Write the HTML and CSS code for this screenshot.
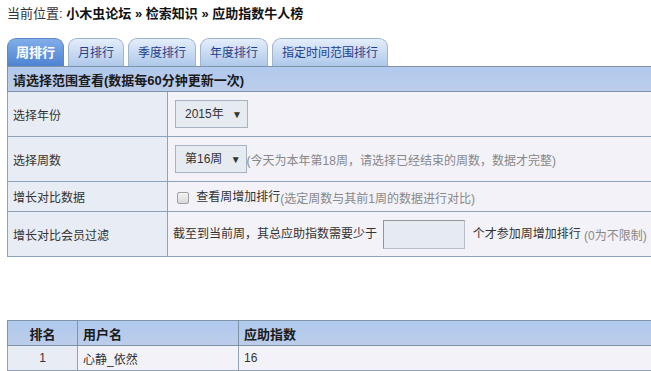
FILE: index.html
```html
<!DOCTYPE html>
<html lang="zh-CN">
<head>
    <meta charset="UTF-8">
    <title>应助指数牛人榜</title>
    <link rel="stylesheet" href="styles.css">
</head>
<body>
    <div class="page">
        <div class="breadcrumb">
            当前位置: <b>小木虫论坛</b> <b>»</b> <b>检索知识</b> <b>»</b> <b>应助指数牛人榜</b>
        </div>

        <ul class="tabs">
            <li class="tab active">周排行</li>
            <li class="tab">月排行</li>
            <li class="tab">季度排行</li>
            <li class="tab">年度排行</li>
            <li class="tab">指定时间范围排行</li>
        </ul>

        <table class="filter">
            <tr>
                <th colspan="2">请选择范围查看(数据每60分钟更新一次)</th>
            </tr>
            <tr class="tall">
                <td class="label">选择年份</td>
                <td><span class="select">2015年 <i>▼</i></span></td>
            </tr>
            <tr class="tall">
                <td class="label">选择周数</td>
                <td><span class="select">第16周 <i>▼</i></span><span class="hint">(今天为本年第18周，请选择已经结束的周数，数据才完整)</span></td>
            </tr>
            <tr>
                <td class="label">增长对比数据</td>
                <td><span class="check"></span> 查看周增加排行<span class="hint">(选定周数与其前1周的数据进行对比)</span></td>
            </tr>
            <tr class="tall">
                <td class="label">增长对比会员过滤</td>
                <td>截至到当前周，其总应助指数需要少于 <span class="input"></span> 个才参加周增加排行 <span class="hint">(0为不限制)</span></td>
            </tr>
        </table>

        <table class="rank">
            <tr>
                <th class="num">排名</th>
                <th class="user">用户名</th>
                <th>应助指数</th>
            </tr>
            <tr>
                <td class="num">1</td>
                <td>心静_依然</td>
                <td>16</td>
            </tr>
        </table>
    </div>
</body>
</html>
```

FILE: styles.css
```css
* {
    margin: 0;
    padding: 0;
    box-sizing: border-box;
}

html, body {
    overflow: hidden;
}

body {
    font-family: "Liberation Sans", "Noto Sans CJK SC", sans-serif;
    font-size: 12px;
    color: #222;
    background: #fff;
}

.page {
    width: 700px;
    padding: 5px 0 0 7px;
}

.breadcrumb {
    font-size: 13px;
    color: #333;
    line-height: 17px;
}

.breadcrumb b {
    color: #111;
}

.tabs {
    list-style: none;
    display: flex;
    gap: 4px;
    margin-top: 16px;
    height: 28px;
    align-items: flex-end;
}

.tab {
    height: 28px;
    line-height: 28px;
    padding: 0 9px;
    font-size: 12px;
    color: #1d3f8e;
    border: 1px solid #9fb4cf;
    border-bottom: none;
    border-radius: 9px 9px 0 0;
    background: linear-gradient(#e4eefb, #aec8ea);
}

.tab.active {
    color: #fff;
    font-weight: bold;
    font-size: 13px;
    padding: 0 8px;
    border-color: #5b88c8;
    background: linear-gradient(#82aee9, #4d83d2);
}

table {
    border-collapse: collapse;
    width: 100%;
}

.filter th,
.rank th {
    height: 25px;
    text-align: left;
    padding: 0 5px;
    font-size: 13px;
    color: #1a1a1a;
    background: linear-gradient(#b0c9ee, #bccde9);
    border: 1px solid #7f93a8;
}

.filter td,
.rank td {
    height: 30px;
    padding: 0 5px;
    border: 1px solid #8ea3ba;
    background: #f3f2f8;
    color: #333;
    font-size: 12px;
}

.filter tr.tall td {
    height: 45px;
}

.filter td.label {
    width: 160px;
    background: #e8ecf4;
}

.select {
    display: inline-block;
    height: 28px;
    line-height: 26px;
    padding: 0 5px 0 9px;
    border: 1px solid #a8b3c2;
    background: #e6eaf1;
    color: #333;
    vertical-align: middle;
    margin-left: 2px;
}

.select i {
    font-style: normal;
    font-size: 10px;
    margin-left: 5px;
}

.hint {
    color: #888;
    vertical-align: middle;
}

.check {
    display: inline-block;
    width: 12px;
    height: 12px;
    border: 1px solid #a0a0a0;
    border-radius: 2px;
    background: linear-gradient(#f4f4f4, #d9d9d9);
    vertical-align: middle;
    margin: 0 4px 0 4px;
}

.input {
    display: inline-block;
    width: 82px;
    height: 29px;
    border: 1px solid #b7bec9;
    border-top-color: #8f969f;
    border-left-color: #8f969f;
    background: #e6eaf1;
    vertical-align: middle;
    margin: 0 4px 0 3px;
}

.rank {
    margin-top: 63px;
}

.rank th,
.rank td {
    height: 25px;
}

.rank .num {
    width: 70px;
    text-align: center;
}

.rank th.user {
    width: 161px;
}

.rank td.num {
    background: #e8ecf4;
}
```
